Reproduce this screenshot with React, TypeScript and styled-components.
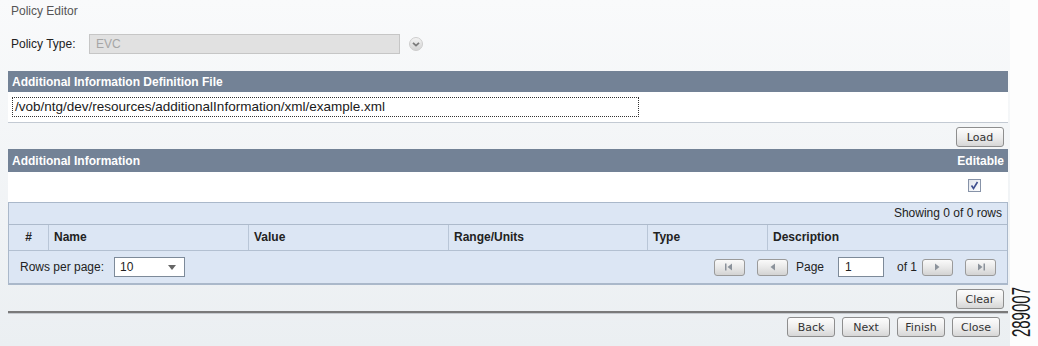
import React from "react";
import styled, { createGlobalStyle } from "styled-components";

const GlobalStyle = createGlobalStyle`
  html, body {
    margin: 0;
    padding: 0;
    background: #fdfdfd;
  }
  body {
    font-family: "Liberation Sans", Arial, sans-serif;
    font-size: 12px;
    color: #222;
  }
`;

const Page = styled.div`
  display: flex;
  width: 1038px;
  height: 346px;
  overflow: hidden;
`;

const Editor = styled.div`
  width: 1000px;
  padding: 0 2px 0 8px;
  background: linear-gradient(#f9fafb, #ebeff2);
  display: flex;
  flex-direction: column;
`;

const Title = styled.div`
  padding: 4px 0 0 3px;
  line-height: 14px;
  color: #555;
`;

const TypeRow = styled.div`
  display: flex;
  align-items: center;
  height: 20px;
  margin: 16px 0 17px;
  padding-left: 3px;
`;

const Label = styled.span`
  width: 78px;
  color: #222;
`;

const DisabledSelect = styled.div`
  box-sizing: border-box;
  width: 311px;
  height: 20px;
  line-height: 18px;
  padding-left: 6px;
  background: #e1e1e1;
  border: 1px solid #c6c6c6;
  color: #a6a6a6;
`;

const Chevron = styled.svg`
  margin-left: 9px;
`;

const Bar = styled.div`
  display: flex;
  justify-content: space-between;
  align-items: center;
  height: ${(p: { $h: number }) => p.$h}px;
  padding: 0 4px;
  background: #738296;
  color: #fff;
  font-weight: bold;
`;

const WhiteRow = styled.div`
  display: flex;
  justify-content: ${(p: { $end?: boolean }) => (p.$end ? "flex-end" : "flex-start")};
  height: 30px;
  box-sizing: border-box;
  padding: 5px 4px;
  background: #fff;
`;

const PathInput = styled.div`
  box-sizing: border-box;
  width: 627px;
  height: 20px;
  line-height: 18px;
  padding-left: 2px;
  border: 1px dotted #333;
  font-size: 13.5px;
  color: #1a1a1a;
  white-space: nowrap;
`;

const Divider = styled.div`
  height: 1px;
  background: #c3cad3;
`;

const ActionRow = styled.div`
  display: flex;
  justify-content: flex-end;
  gap: 7px;
  padding: ${(p: { $pad: string }) => p.$pad};
`;

const Button = styled.button`
  box-sizing: border-box;
  min-width: 48px;
  height: 20px;
  padding: 0 6px;
  border: 1px solid #8e8e8e;
  border-radius: 3px;
  background: linear-gradient(#fdfdfd, #ececec 55%, #d6d6d6);
  font-family: "DejaVu Sans", Tahoma, sans-serif;
  font-size: 11px;
  color: #333;
`;

const Check = styled.svg`
  margin: 2px 23px 0 0;
`;

const Table = styled.div`
  border: 1px solid #aab8ca;
  border-bottom-width: 2px;
  background: #dce6f4;
`;

const Showing = styled.div`
  height: 21px;
  line-height: 21px;
  padding-right: 5px;
  text-align: right;
  border-bottom: 1px solid #adbacb;
`;

const Columns = styled.div`
  display: grid;
  grid-template-columns: 39px 200px 200px 199px 120px 1fr;
  height: 25px;
  border-bottom: 1px solid #b3c0d1;
`;

const ColHead = styled.div`
  line-height: 25px;
  padding-left: ${(p: { $first?: boolean }) => (p.$first ? "0" : "5px")};
  text-align: ${(p: { $first?: boolean }) => (p.$first ? "center" : "left")};
  border-left: ${(p: { $first?: boolean }) => (p.$first ? "none" : "1px solid #b9c6d7")};
  font-weight: bold;
  color: #222;
`;

const Pager = styled.div`
  display: flex;
  align-items: center;
  height: 32px;
  padding: 0 11px;
`;

const Spacer = styled.div`
  flex: 1;
`;

const RowsSelect = styled.div`
  box-sizing: border-box;
  display: flex;
  align-items: center;
  justify-content: space-between;
  width: 71px;
  height: 20px;
  margin-left: 10px;
  padding: 0 8px 0 5px;
  background: #fff;
  border: 1px solid #7d8a99;
`;

const PageInput = styled.div`
  box-sizing: border-box;
  width: 46px;
  height: 20px;
  line-height: 18px;
  padding-left: 6px;
  background: #fff;
  border: 1px solid #7d8a99;
`;

const NavButton = styled.div`
  box-sizing: border-box;
  display: flex;
  align-items: center;
  justify-content: center;
  width: 31px;
  height: 17px;
  margin-left: ${(p: { $gap: number }) => p.$gap}px;
  border: 1px solid #9a9a9a;
  border-radius: 3px;
  background: linear-gradient(#fafafa, #e6e6e6 55%, #d3d3d3);
`;

const PagerText = styled.span`
  margin-left: ${(p: { $gap: number }) => p.$gap}px;
`;

const Rule = styled.div`
  height: 2px;
  background: #7a7a7a;
  border-bottom: 1px solid #c6cacf;
`;

const Strip = styled.div`
  flex: 1;
  display: flex;
  flex-direction: column;
  align-items: flex-start;
  background: #fdfdfd;
`;

const FigureNo = styled.span`
  margin: 287px 0 0 5px;
  writing-mode: vertical-rl;
  transform: rotate(180deg) scaleX(1.75);
  font-size: 15px;
  line-height: 11px;
  color: #1a1a1a;
`;

type NavKind = "first" | "prev" | "next" | "last";

function NavIcon({ kind }: { kind: NavKind }) {
  const left = kind === "first" || kind === "prev";
  const bar = kind === "first" || kind === "last";
  return (
    <svg width="10" height="8" viewBox="0 0 10 8">
      {left ? (
        <>
          {bar && <rect x="1" y="0.5" width="1.5" height="7" fill="#8b929b" />}
          <polygon points="8,0.5 8,7.5 3.5,4" fill="#8b929b" />
        </>
      ) : (
        <>
          <polygon points="2,0.5 2,7.5 6.5,4" fill="#8b929b" />
          {bar && <rect x="7.5" y="0.5" width="1.5" height="7" fill="#8b929b" />}
        </>
      )}
    </svg>
  );
}

const columns = ["#", "Name", "Value", "Range/Units", "Type", "Description"];

export default function App() {
  return (
    <Page>
      <GlobalStyle />
      <Editor>
        <Title>Policy Editor</Title>
        <TypeRow>
          <Label>Policy Type:</Label>
          <DisabledSelect>EVC</DisabledSelect>
          <Chevron width="14" height="14" viewBox="0 0 14 14">
            <defs>
              <linearGradient id="chev" x1="0" y1="0" x2="0" y2="1">
                <stop offset="0" stopColor="#f4f4f4" />
                <stop offset="1" stopColor="#d2d2d2" />
              </linearGradient>
            </defs>
            <circle cx="7" cy="7" r="6.5" fill="url(#chev)" stroke="#cdcdcd" />
            <path d="M4 5.8 L7 8.6 L10 5.8" fill="none" stroke="#7a7a7a" strokeWidth="1.8" />
          </Chevron>
        </TypeRow>

        <Bar $h={21}>Additional Information Definition File</Bar>
        <WhiteRow>
          <PathInput>/vob/ntg/dev/resources/additionalInformation/xml/example.xml</PathInput>
        </WhiteRow>
        <Divider />
        <ActionRow $pad="4px 4px 2px">
          <Button>Load</Button>
        </ActionRow>

        <Bar $h={23}>
          <span>Additional Information</span>
          <span>Editable</span>
        </Bar>
        <WhiteRow $end>
          <Check width="13" height="13" viewBox="0 0 13 13">
            <defs>
              <linearGradient id="box" x1="0" y1="0" x2="1" y2="1">
                <stop offset="0" stopColor="#dfe3ea" />
                <stop offset="1" stopColor="#ffffff" />
              </linearGradient>
            </defs>
            <rect x="0.5" y="0.5" width="12" height="12" fill="url(#box)" stroke="#8793a8" />
            <path d="M3.5 6.5 L5.5 9.5 L9.5 3" fill="none" stroke="#3f4f8e" strokeWidth="1.6" />
          </Check>
        </WhiteRow>

        <Table>
          <Showing>Showing 0 of 0 rows</Showing>
          <Columns>
            {columns.map((c, i) => (
              <ColHead key={c} $first={i === 0}>
                {c}
              </ColHead>
            ))}
          </Columns>
          <Pager>
            <span>Rows per page:</span>
            <RowsSelect>
              <span>10</span>
              <svg width="8" height="5" viewBox="0 0 8 5">
                <polygon points="0,0 8,0 4,5" fill="#666" />
              </svg>
            </RowsSelect>
            <Spacer />
            <NavButton $gap={0}>
              <NavIcon kind="first" />
            </NavButton>
            <NavButton $gap={12}>
              <NavIcon kind="prev" />
            </NavButton>
            <PagerText $gap={8}>Page</PagerText>
            <PagerText $gap={14}>
              <PageInput>1</PageInput>
            </PagerText>
            <PagerText $gap={13}>of 1</PagerText>
            <NavButton $gap={5}>
              <NavIcon kind="next" />
            </NavButton>
            <NavButton $gap={12}>
              <NavIcon kind="last" />
            </NavButton>
          </Pager>
        </Table>

        <ActionRow $pad="4px 4px 2px">
          <Button>Clear</Button>
        </ActionRow>
        <Rule />
        <ActionRow $pad="3px 8px 0">
          <Button>Back</Button>
          <Button>Next</Button>
          <Button>Finish</Button>
          <Button>Close</Button>
        </ActionRow>
      </Editor>
      <Strip>
        <FigureNo>289007</FigureNo>
      </Strip>
    </Page>
  );
}
